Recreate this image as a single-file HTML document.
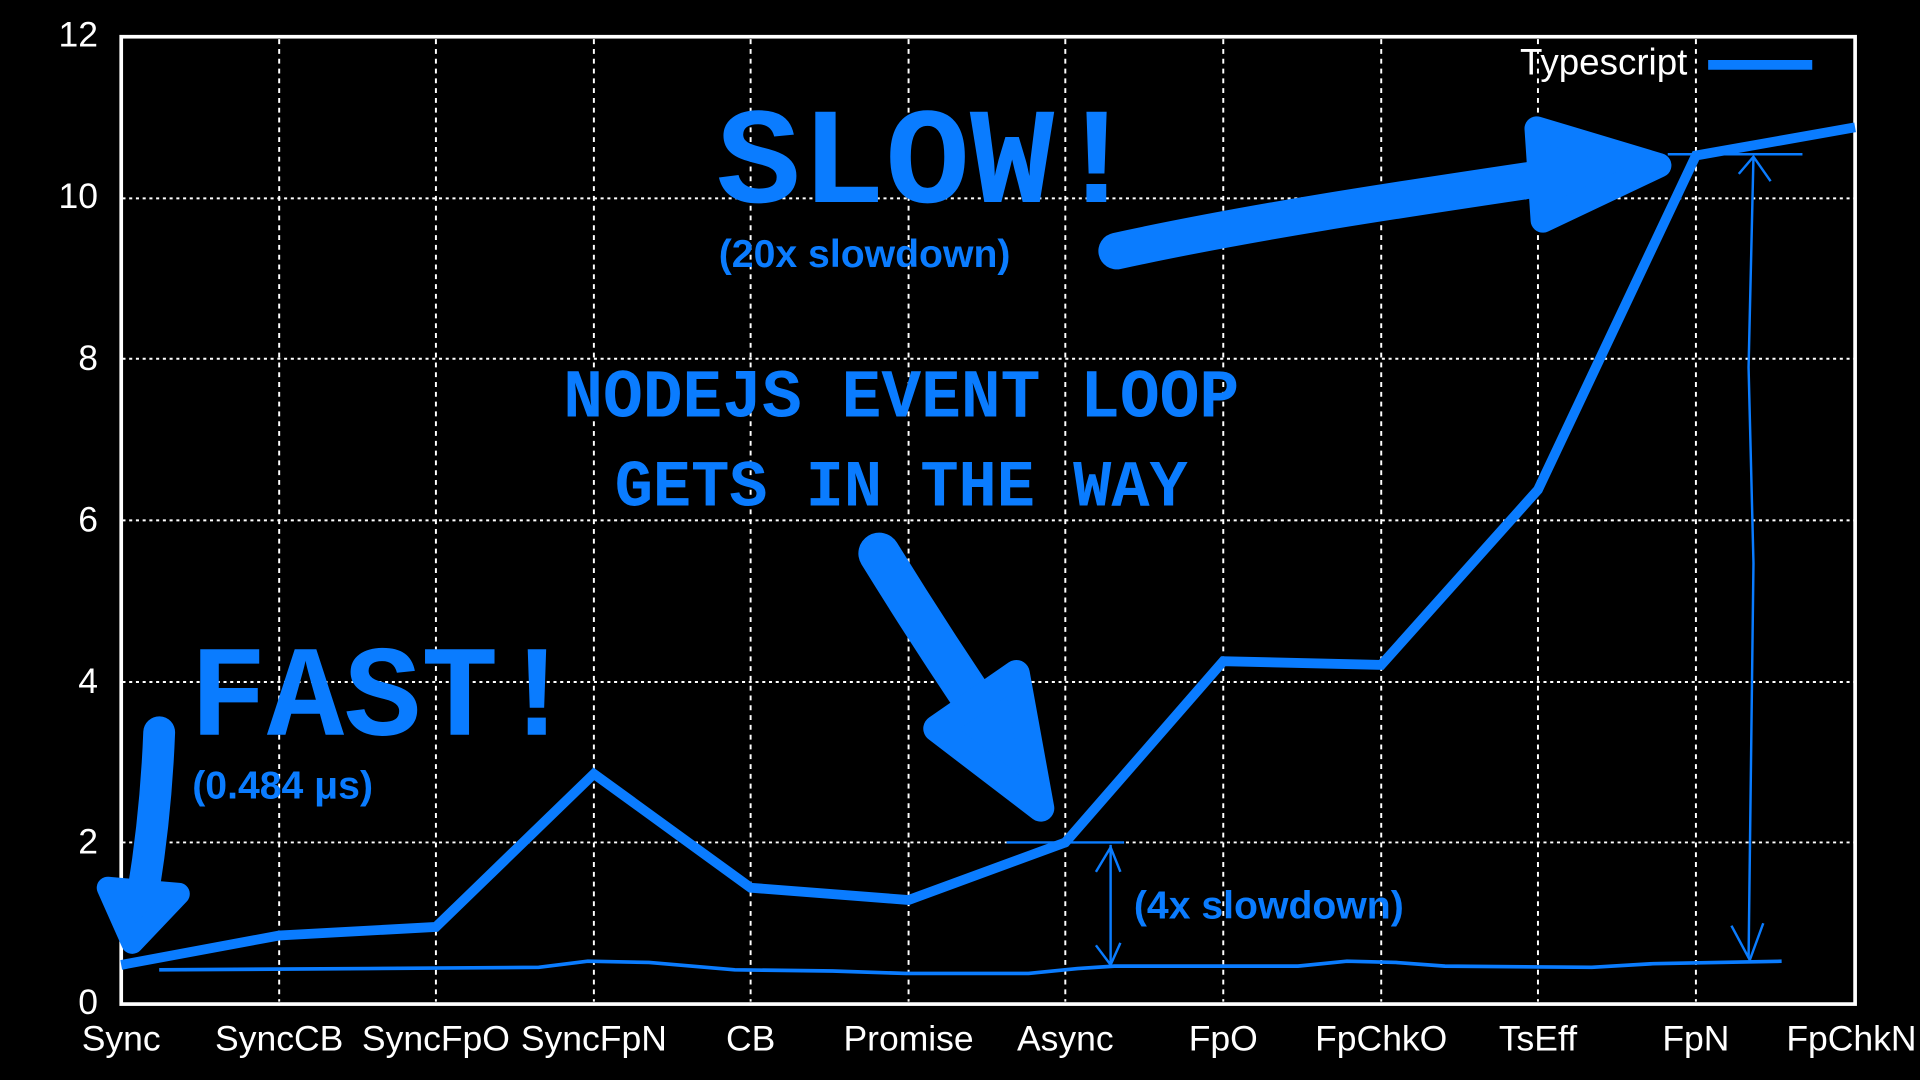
<!DOCTYPE html>
<html><head><meta charset="utf-8"><style>html,body{margin:0;padding:0;background:#000;overflow:hidden}svg{display:block}</style></head>
<body>
<svg width="1920" height="1080" viewBox="0 0 1568 882" xmlns="http://www.w3.org/2000/svg">
<rect width="1568" height="882" fill="#000"/>
<g stroke="#fff" stroke-width="1.6" stroke-dasharray="4 4">
<line x1="228" y1="32" x2="228" y2="818"/><line x1="356" y1="32" x2="356" y2="818"/><line x1="485" y1="32" x2="485" y2="818"/><line x1="613" y1="32" x2="613" y2="818"/><line x1="742" y1="32" x2="742" y2="818"/><line x1="870" y1="32" x2="870" y2="818"/><line x1="999" y1="32" x2="999" y2="818"/><line x1="1128" y1="32" x2="1128" y2="818"/><line x1="1256" y1="32" x2="1256" y2="818"/><line x1="1385" y1="32" x2="1385" y2="818"/>
</g>
<g stroke="#fff" stroke-width="1.6" stroke-dasharray="2.5 3">
<line x1="100" y1="688" x2="1514" y2="688"/><line x1="100" y1="557" x2="1514" y2="557"/><line x1="100" y1="425" x2="1514" y2="425"/><line x1="100" y1="293" x2="1514" y2="293"/><line x1="100" y1="162" x2="1514" y2="162"/>
</g>
<rect x="99" y="30" width="1416" height="790" fill="none" stroke="#fff" stroke-width="3"/>
<g font-family="Liberation Sans, sans-serif" font-size="29" fill="#fff" text-anchor="end">
<text x="80" y="38">12</text><text x="80" y="170">10</text><text x="80" y="302">8</text><text x="80" y="434">6</text><text x="80" y="566">4</text><text x="80" y="697">2</text><text x="80" y="828">0</text>
</g>
<g font-family="Liberation Sans, sans-serif" font-size="29" fill="#fff" text-anchor="middle">
<text x="99" y="858">Sync</text><text x="228" y="858">SyncCB</text><text x="356" y="858">SyncFpO</text><text x="485" y="858">SyncFpN</text><text x="613" y="858">CB</text><text x="742" y="858">Promise</text><text x="870" y="858">Async</text><text x="999" y="858">FpO</text><text x="1128" y="858">FpChkO</text><text x="1256" y="858">TsEff</text><text x="1385" y="858">FpN</text><text x="1512" y="858">FpChkN</text>
</g>
<text x="1378" y="61" font-family="Liberation Sans, sans-serif" font-size="30" fill="#fff" text-anchor="end">Typescript</text>
<line x1="1395" y1="53" x2="1480" y2="53" stroke="#0a7cff" stroke-width="8"/>
<polyline fill="none" stroke="#0a7cff" stroke-width="8" stroke-linejoin="miter" points="99,788 228,764 356,757 485,632 613,725 742,735 870,688 999,540 1128,543 1256,400 1385,127 1515,104"/>
<polyline fill="none" stroke="#0a7cff" stroke-width="3" points="130,792 300,791 440,790 480,785 530,786 600,792 680,793 740,795 840,795 880,791 910,789 1060,789 1100,785 1140,786 1180,789 1300,790 1350,787 1455,785"/>
<g stroke="#0a7cff" stroke-width="2" fill="none">
<line x1="822" y1="688" x2="918" y2="688"/><line x1="907" y1="690" x2="907" y2="786"/><path d="M895,712 L907,692 L915,712 M895,772 L907,788 L915,770"/>
<line x1="1362" y1="126" x2="1472" y2="126"/><path d="M1432,128 L1428,300 L1432,460 L1428,782"/><path d="M1420,142 L1432,128 L1446,148 M1414,756 L1429,784 L1440,754"/>
</g>
<g stroke="#0a7cff" stroke-linecap="round" stroke-linejoin="round" fill="#0a7cff">
<path d="M912,205 C1050,175 1200,155 1330,135" stroke-width="30" fill="none"/>
<path d="M1255,105 L1355,135 L1260,180 Z" stroke-width="20"/>
<path d="M718,452 C760,520 800,580 835,630" stroke-width="34" fill="none"/>
<path d="M765,595 L850,660 L830,550 Z" stroke-width="22"/>
<path d="M130,598 C128,650 122,700 115,740" stroke-width="26" fill="none"/>
<path d="M88,725 L108,770 L146,730 Z" stroke-width="18"/>
</g>
<g font-family="Liberation Mono, monospace" font-weight="bold" fill="#0a7cff">
<text x="585" y="165" font-size="112" textLength="345" lengthAdjust="spacingAndGlyphs">SLOW!</text>
<text x="460" y="340" font-size="56" textLength="552" lengthAdjust="spacingAndGlyphs">NODEJS EVENT LOOP</text>
<text x="502" y="413" font-size="54" textLength="468" lengthAdjust="spacingAndGlyphs">GETS IN THE WAY</text>
<text x="155" y="600" font-size="106" textLength="315" lengthAdjust="spacingAndGlyphs">FAST!</text>
</g>
<g font-family="Liberation Sans, sans-serif" font-weight="bold" font-size="32" fill="#0a7cff">
<text x="587" y="218">(20x slowdown)</text>
<text x="157" y="652">(0.484 μs)</text>
<text x="926" y="750">(4x slowdown)</text>
</g>
</svg>
</body></html>
